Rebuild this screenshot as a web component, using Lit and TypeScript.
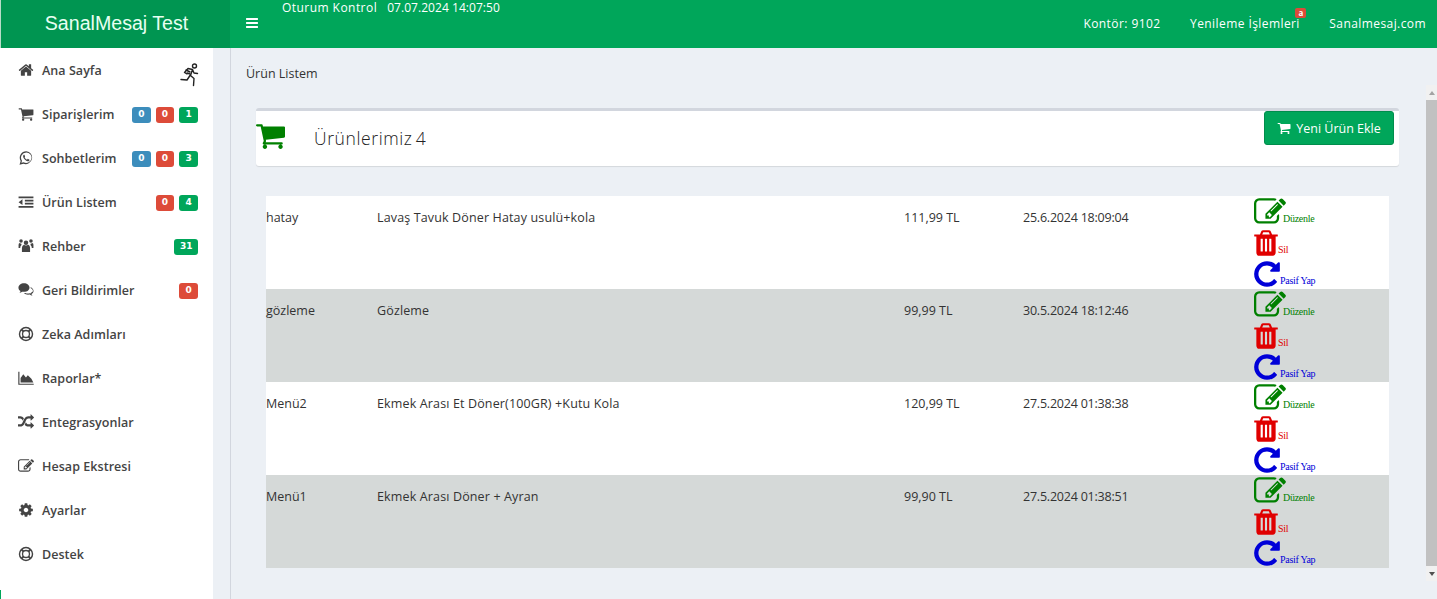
import { LitElement, html, css, svg } from "lit";
import { customElement } from "lit/decorators.js";

const P: Record<string, any> = {
  home: svg`<path d="M1472 992v480q0 26-19 45t-45 19h-384v-384h-256v384h-384q-26 0-45-19t-19-45v-480q0-1 .5-3t.5-3l575-474 575 474q1 2 1 6zm223-69l-62 74q-8 9-21 11h-3q-13 0-21-7l-692-577-692 577q-12 8-24 7-13-2-21-11l-62-74q-8-10-7-23.500t11-21.500l719-599q32-26 76-26t76 26l244 204v-195q0-14 9-23t23-9h192q14 0 23 9t9 23v408l219 182q10 8 11 21.500t-7 23.500z"/>`,
  cart: svg`<path d="M704 1536q0 52-38 90t-90 38-90-38-38-90 38-90 90-38 90 38 38 90zm896 0q0 52-38 90t-90 38-90-38-38-90 38-90 90-38 90 38 38 90zm128-1088v512q0 24-16.500 42.500t-40.500 21.500l-1044 122q13 60 13 70 0 16-24 64h920q26 0 45 19t19 45-19 45-45 19h-1024q-26 0-45-19t-19-45q0-11 8-31.500t16-36 21.500-40 15.500-29.500l-177-823h-204q-26 0-45-19t-19-45 19-45 45-19h256q16 0 28.500 6.500t19.500 15.500 13 24.500 8 26 5.500 29.500 4.500 26h1201q26 0 45 19t19 45z"/>`,
  bars: svg`<path d="M1664 1344v128q0 26-19 45t-45 19h-1408q-26 0-45-19t-19-45v-128q0-26 19-45t45-19h1408q26 0 45 19t19 45zm0-512v128q0 26-19 45t-45 19h-1408q-26 0-45-19t-19-45v-128q0-26 19-45t45-19h1408q26 0 45 19t19 45zm0-512v128q0 26-19 45t-45 19h-1408q-26 0-45-19t-19-45v-128q0-26 19-45t45-19h1408q26 0 45 19t19 45z"/>`,
  trash: svg`<path d="M704 1376v-704q0-14-9-23t-23-9h-64q-14 0-23 9t-9 23v704q0 14 9 23t23 9h64q14 0 23-9t9-23zm256 0v-704q0-14-9-23t-23-9h-64q-14 0-23 9t-9 23v704q0 14 9 23t23 9h64q14 0 23-9t9-23zm256 0v-704q0-14-9-23t-23-9h-64q-14 0-23 9t-9 23v704q0 14 9 23t23 9h64q14 0 23-9t9-23zm-544-992h448l-48-117q-7-9-17-11h-317q-10 2-17 11zm928 32v64q0 14-9 23t-23 9h-96v948q0 83-47 143.500t-113 60.500h-832q-66 0-113-58.500t-47-141.500v-952h-96q-14 0-23-9t-9-23v-64q0-14 9-23t23-9h309l70-167q15-37 54-63t79-26h320q40 0 79 26t54 63l70 167h309q14 0 23 9t9 23z"/>`,
  repeat: svg`<path d="M1664 256v448q0 26-19 45t-45 19h-448q-42 0-59-40-17-39 14-69l138-138q-148-137-349-137-104 0-198.500 40.500t-163.500 109.500-109.500 163.500-40.500 198.500 40.500 198.500 109.500 163.500 163.500 109.500 198.500 40.500q119 0 225-52t179-147q7-10 23-12 15 0 25 9l137 138q9 8 9.500 20.500t-7.500 22.500q-109 132-264 204.500t-327 72.500q-156 0-298-61t-245-164-164-245-61-298 61-298 164-245 245-164 298-61q147 0 284.500 55.500t244.500 156.500l130-129q29-31 70-14 39 17 39 59z"/>`,
  edit: svg`<path d="M888 1184l116-116-152-152-116 116v56h96v96h56zm440-720q-16-16-33 1l-350 350q-17 17-1 33t33-1l350-350q17-17 1-33zm80 594v190q0 119-84.500 203.500t-203.500 84.500h-832q-119 0-203.500-84.500t-84.500-203.500v-832q0-119 84.500-203.500t203.500-84.500h832q63 0 117 25 15 7 18 23 3 17-9 29l-49 49q-14 14-32 8-23-6-45-6h-832q-66 0-113 47t-47 113v832q0 66 47 113t113 47h832q66 0 113-47t47-113v-126q0-13 9-22l64-64q15-15 35-7t20 29zm-96-738l288 288-672 672h-288v-288zm444 132l-92 92-288-288 92-92q28-28 68-28t68 28l152 152q28 28 28 68t-28 68z"/>`,
  cog: svg`<path d="M1152 896q0-106-75-181t-181-75-181 75-75 181 75 181 181 75 181-75 75-181zm512-109v222q0 12-8 23t-20 13l-185 28q-19 54-39 91 35 50 107 138 10 12 10 25t-9 23q-27 37-99 108t-94 71q-12 0-26-9l-138-108q-44 23-91 38-16 136-29 186-7 28-36 28h-222q-14 0-24.500-8.500t-11.500-21.500l-28-184q-49-16-90-37l-141 107q-10 9-25 9-14 0-25-11-126-114-165-168-7-10-7-23 0-12 8-23 15-21 51-66.500t54-70.500q-27-50-41-99l-183-27q-13-2-21-12.500t-8-23.500v-222q0-12 8-23t19-13l186-28q14-46 39-92-40-57-107-138-10-12-10-24 0-10 9-23 26-36 98.500-107.500t94.500-71.500q13 0 26 10l138 107q44-23 91-38 16-136 29-186 7-28 36-28h222q14 0 24.500 8.500t11.500 21.500l28 184q49 16 90 37l142-107q9-9 24-9 13 0 25 10 129 119 165 170 7 8 7 22 0 12-8 23-15 21-51 66.500t-54 70.500q26 50 41 98l183 28q13 2 21 12.500t8 23.500z"/>`,
  random: svg`<path d="M666 481q-60 92-137 273-22-45-37-72.500t-40.500-63.500-51-56.500-63-35-81.500-14.500h-224q-14 0-23-9t-9-23v-192q0-14 9-23t23-9h224q250 0 410 225zm1126 799q0 14-9 23l-320 320q-9 9-23 9-13 0-22.500-9.500t-9.500-22.500v-192q-32 0-85 .5t-81 1-73-1-71-5-64-10.500-63-18.500-58-28.500-59-40-55-53.500-56-69q59-93 136-273 22 45 37 72.500t40.500 63.500 51 56.500 63 35 81.500 14.500h256v-192q0-14 9-23t23-9q12 0 24 10l319 319q9 9 9 23zm0-896q0 14-9 23l-320 320q-9 9-23 9-13 0-22.500-9.500t-9.500-22.500v-192h-256q-48 0-87 15t-69 45-51 61.500-45 77.500q-32 62-78 171-29 66-49.500 111t-54 105-64 100-74 83-90 68.500-106.500 42-128 16.500h-224q-14 0-23-9t-9-23v-192q0-14 9-23t23-9h224q48 0 87-15t69-45 51-61.500 45-77.500q32-62 78-171 29-66 49.500-111t54-105 64-100 74-83 90-68.500 106.500-42 128-16.500h256v-192q0-14 9-23t23-9q12 0 24 10l319 319q9 9 9 23z"/>`,
  whatsapp: svg`<path fill-rule="evenodd" d="M930 130a730 730 0 0 0-630 1100l-130 430 440-115a730 730 0 1 0 320-1415zm0 140a590 590 0 1 1-300 1100l-250 65 68-240a590 590 0 0 1 482-925z"/><path d="M650 540q-70 50-80 150 0 150 160 340 190 220 370 240 100 0 160-80 35-55 22-100l-190-100-80 90q-110-40-190-140-60-70-80-130l55-75-75-190z"/>`,
  outdent: svg`<path d="M64 288h1664v192H64zM768 640h960v192H768zM768 992h960v192H768zM64 1344h1664v192H64zM500 592v640L64 912z"/>`,
  users: svg`<circle cx="896" cy="520" r="250"/><circle cx="340" cy="340" r="200"/><circle cx="1452" cy="340" r="200"/><path d="M440 1560V1120q0-300 220-370 110 90 236 90t236-90c220 70 220 370 220 370v440z"/><path d="M64 1120V760q0-160 140-190 60 70 160 70 10 0 30-3-20 70 0 150-150 100-150 333z"/><path d="M1728 1120V760q0-160-140-190-60 70-160 70-10 0-30-3 20 70 0 150 150 100 150 333z"/>`,
  comments: svg`<path d="M1290 640c0-270-280-490-620-490S50 370 50 640c0 150 90 290 230 370-20 70-60 130-120 190 110-10 220-60 300-120 65 15 135 20 210 20 340 0 620-200 620-460z"/><path d="M1400 560c190 90 340 250 340 440 0 140-90 270-230 350 20 70 60 130 120 190-130-10-240-70-320-130-55 10-110 15-170 15-200 0-370-70-470-180 60 0 120-8 170-20 60 40 180 70 300 70 60 0 120-8 180-22l50-15 50 35c10 8 20 15 35 22l-30-90 80-50c100-60 170-150 170-175 0-100-80-220-240-290z"/>`,
  ring: svg`<g fill="none" stroke="currentColor"><circle cx="896" cy="896" r="730" stroke-width="160"/><circle cx="896" cy="896" r="390" stroke-width="150"/><path stroke-width="230" d="M380 380l240 240M1412 380l-240 240M380 1412l240-240M1412 1412l-240-240"/></g>`,
  area: svg`<path d="M32 192h130v1340h1600v130H32z"/><path d="M290 1400V900l300-420 300 350 210-230 400 370 220 430z"/>`,
};
const icon = (n: string) => html`<svg class="ic" viewBox="0 0 1792 1792" fill="currentColor">${P[n]}</svg>`;

const menu = [
  { i: "home", t: "Ana Sayfa", b: [] as [string, string][], run: true },
  { i: "cart", t: "Siparişlerim", b: [["b", "0"], ["r", "0"], ["g", "1"]] },
  { i: "whatsapp", t: "Sohbetlerim", b: [["b", "0"], ["r", "0"], ["g", "3"]] },
  { i: "outdent", t: "Ürün Listem", b: [["r", "0"], ["g", "4"]] },
  { i: "users", t: "Rehber", b: [["g", "31"]] },
  { i: "comments", t: "Geri Bildirimler", b: [["r", "0"]] },
  { i: "ring", t: "Zeka Adımları", b: [] },
  { i: "area", t: "Raporlar*", b: [] },
  { i: "random", t: "Entegrasyonlar", b: [] },
  { i: "edit", t: "Hesap Ekstresi", b: [] },
  { i: "cog", t: "Ayarlar", b: [] },
  { i: "ring", t: "Destek", b: [] },
] as { i: string; t: string; b: [string, string][]; run?: boolean }[];

const rows = [
  ["hatay", "Lavaş Tavuk Döner Hatay usulü+kola", "111,99 TL", "25.6.2024 18:09:04"],
  ["gözleme", "Gözleme", "99,99 TL", "30.5.2024 18:12:46"],
  ["Menü2", "Ekmek Arası Et Döner(100GR) +Kutu Kola", "120,99 TL", "27.5.2024 01:38:38"],
  ["Menü1", "Ekmek Arası Döner + Ayran", "99,90 TL", "27.5.2024 01:38:51"],
];

@customElement("app-root")
export class AppRoot extends LitElement {
  static styles = css`
    :host { display: block; width: 1437px; height: 599px; overflow: hidden; background: #ecf0f5;
      font-family: "Open Sans", "Noto Sans", sans-serif; font-size: 13px; color: #333; }
    * { box-sizing: border-box; }
    .top { display: flex; height: 48px; background: #00a65a; color: #fff; }
    .logo { width: 230px; background: #009551; border-left: 1px solid #b8dcc8; display: flex; align-items: center; justify-content: center;
      font-family: "Liberation Sans", sans-serif; font-size: 19.600px; color: #e8fff2; padding: 0 0 2px 2px; }
    .burger { width: 14px; height: 14px; margin: 16px 23px 0 15px; flex: none; }
    .session { font-size: 12px; line-height: 16px; display: flex; gap: 10px; height: 16px; padding-top: 0; }
    .s1 { letter-spacing: .45px; }
    .s2 { letter-spacing: .05px; }
    .nav { margin-left: auto; display: flex; font-size: 12px; line-height: 16px; padding: 16px 11px 0 0; gap: 29.500px; position: relative; letter-spacing: .42px; }
    .pill { position: absolute; left: 212px; top: 8px; width: 11px; height: 10px; border-radius: 2px; background: #dd4b39;
      color: #fff; font-size: 8px; line-height: 10px; text-align: center; font-weight: 700; letter-spacing: 0; }
    .body { display: flex; height: 551px; }
    .side { width: 213px; flex: none; background: #fff; position: relative; }
    .gutter { width: 18px; flex: none; border-right: 1px solid #d2d6de; }
    .item { height: 44px; padding: 0 15px 0 18px; display: flex; align-items: center; color: #444; font-weight: 600;
      font-size: 12.5px; letter-spacing: .05px; position: relative; }
    .ic { width: 16px; height: 16px; margin-right: 8px; flex: none; }
    .badges { margin-left: auto; margin-top: 1px; display: flex; gap: 5px; }
    .bd { height: 16px; min-width: 18.700px; padding: 0 5.500px; border-radius: 3px; color: #fff; font-family: "DejaVu Sans", sans-serif; font-size: 9px; font-weight: 700;
      line-height: 14px; text-align: center; }
    .b { background: #3c8dbc; } .r { background: #dd4b39; } .g { background: #00a65a; }
    .run { margin-left: auto; margin-top: 10px; margin-right: -1px; width: 20px; height: 24px; flex: none; }
    .tick { position: absolute; left: 0; bottom: 0; width: 1px; height: 9px; background: #00a65a; }
    .main { flex: 1; min-width: 0; padding: 17px 0 0 15px; }
    .crumb { font-size: 12.5px; line-height: 18px; color: #333; }
    .box { margin: 25px 0 0 10px; width: 1143px; height: 58px; background: #fff; border-top: 3px solid #d2d6de; border-radius: 3px;
      box-shadow: 0 1px 1px rgba(0,0,0,.1); display: flex; align-items: flex-start; }
    .bigcart { width: 29px; height: 26px; margin-top: 12px; color: #008000; flex: none; }
    .title { margin: 17px 0 0 29px; font-size: 17.500px; line-height: 20px; font-weight: 300; color: #222; letter-spacing: .6px; word-spacing: -2px; }
    .btn { margin-left: auto; margin-right: 5px; width: 130px; height: 34px; background: #00a65a; border-radius: 3px; color: #fff;
      display: flex; align-items: center; justify-content: center; font-size: 12.5px; gap: 5px; border: 1px solid #008d4c; }
    .btn svg { width: 14px; height: 14px; }
    .table { margin: 30px 0 0 20px; width: 1123px; }
    .row { display: grid; grid-template-columns: 111px 527px 119px 231px 1fr; height: 93px; background: #fff; font-size: 12.5px; line-height: 18px; color: #333; }
    .row.alt { background: #d5d9d8; }
    .cell { padding-top: 13px; }
    .c1 { letter-spacing: .14px; }
    .c3 { letter-spacing: -.22px; }
    .acts { display: flex; flex-direction: column; }
    .act { height: 31px; display: flex; align-items: flex-end; font-family: "Liberation Serif", serif; font-size: 10px; line-height: 11px; white-space: nowrap; letter-spacing: -.28px; padding-bottom: 3px; }
    .act svg { flex: none; }
    .e { color: #008000; } .s { color: #e00000; } .p { color: #0000d8; }
    .e svg { width: 32px; height: 32px; margin: -6px -3px -4px 0; }
    .s svg { width: 30px; height: 30px; margin: 0 -3px -3px -3px; }
    .p svg { width: 30px; height: 30px; margin: 0 -2px -3px -2px; }
    .lab { position: relative; top: 0; }
    .bar { width: 11px; flex: none; margin-top: 37px; background: #f1f1f1; display: flex; flex-direction: column; align-items: center; height: 496px; }
    .arrow { width: 11px; height: 15px; display: flex; align-items: center; justify-content: center; flex: none; }
    .thumb { width: 11px; flex: 1; background: #c1c1c1; }
    .up { width: 0; height: 0; border: 3.5px solid transparent; border-bottom: 4px solid #a3a3a3; border-top: 0; }
    .dn { width: 0; height: 0; border: 3.5px solid transparent; border-top: 4px solid #505050; border-bottom: 0; }
  `;

  render() {
    return html`
      <div class="top">
        <div class="logo">SanalMesaj Test</div>
        <svg class="burger" viewBox="0 0 1792 1792" fill="currentColor">${P.bars}</svg>
        <div class="session"><span class="s1">Oturum Kontrol</span><span class="s2">07.07.2024 14:07:50</span></div>
        <div class="nav">
          <span>Kontör: 9102</span><span>Yenileme İşlemleri</span><span>Sanalmesaj.com</span>
          <span class="pill">a</span>
        </div>
      </div>
      <div class="body">
        <div class="side">
          ${menu.map((m) => html`<div class="item">${icon(m.i)}<span>${m.t}</span>
            ${m.run ? html`<svg class="run" viewBox="0 0 20 24" fill="none" stroke="#222" stroke-width="1.4" stroke-linejoin="round" stroke-linecap="round">
              <circle cx="15.500" cy="3" r="2"/><path d="M9 5.500l4.500 1-2 6 3.500 3-.5 7 M11 12.500l-3 4.500-6 -.5 M9 5.500l-3.500 4 2.500 1.500 M13.500 6.500l1.500 3.500 3.500.5"/><path d="M7 7l4 2 M8 10l3 1"/></svg>` : ""}
            ${m.b.length ? html`<div class="badges">${m.b.map(([c, v]) => html`<span class="bd ${c}">${v}</span>`)}</div>` : ""}
          </div>`)}
          <div class="tick"></div>
        </div>
        <div class="gutter"></div>
        <div class="main">
          <div class="crumb">Ürün Listem</div>
          <div class="box">
            <svg class="bigcart" viewBox="64 192 1664 1472" preserveAspectRatio="none" fill="currentColor">${P.cart}</svg>
            <div class="title">Ürünlerimiz 4</div>
            <div class="btn"><svg viewBox="0 0 1792 1792" fill="currentColor">${P.cart}</svg><span>Yeni Ürün Ekle</span></div>
          </div>
          <div class="table">
            ${rows.map((r, i) => html`<div class="row ${i % 2 ? "alt" : ""}">
              ${r.map((c, k) => html`<div class="cell c${k}">${c}</div>`)}
              <div class="acts">
                <div class="act e"><svg viewBox="0 0 1792 1792" fill="currentColor">${P.edit}</svg><span class="lab">Düzenle</span></div>
                <div class="act s"><svg viewBox="0 0 1792 1792" fill="currentColor">${P.trash}</svg><span class="lab">Sil</span></div>
                <div class="act p"><svg viewBox="0 0 1792 1792" fill="currentColor">${P.repeat}</svg><span class="lab">Pasif Yap</span></div>
              </div>
            </div>`)}
          </div>
        </div>
        <div class="bar">
          <div class="arrow"><i class="up"></i></div>
          <div class="thumb"></div>
          <div class="arrow"><i class="dn"></i></div>
        </div>
      </div>
    `;
  }
}
